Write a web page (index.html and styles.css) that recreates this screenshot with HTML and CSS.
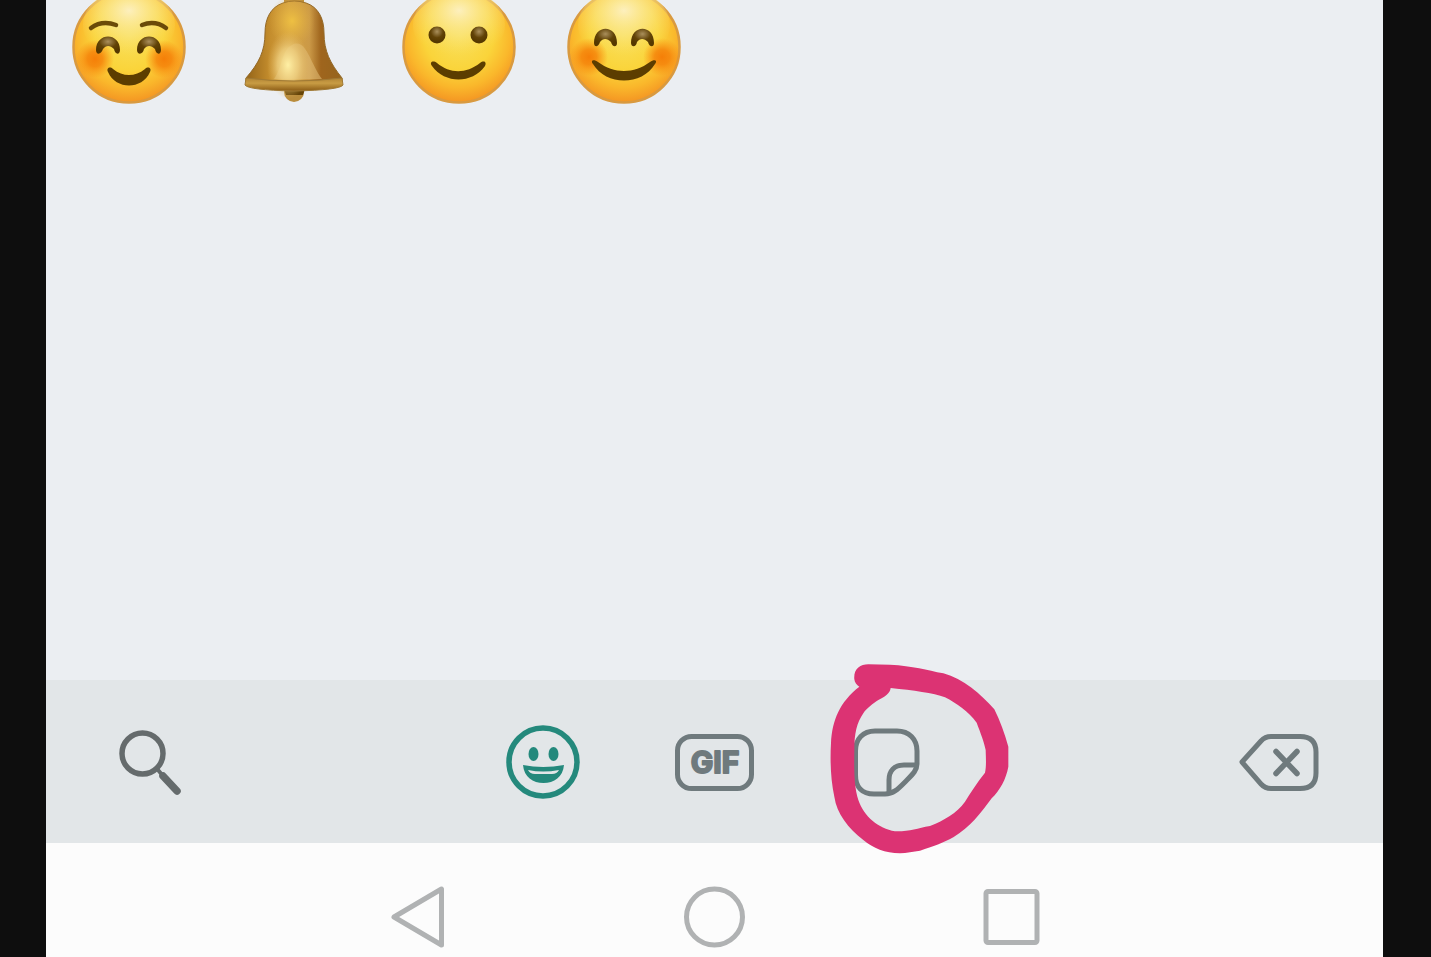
FILE: index.html
```html
<!DOCTYPE html>
<html lang="en">
<head>
  <meta charset="UTF-8">
  <meta name="viewport" content="width=device-width, initial-scale=1">

  <title>Emoji keyboard</title>

  <link rel="stylesheet" href="styles.css">
</head>
<body>

  <!-- shared gradients -->
  <svg class="Defs" aria-hidden="true">
    <defs>
      <radialGradient id="skin" cx="50%" cy="40%" r="62%">
        <stop offset="0" stop-color="#f9e05c"/>
        <stop offset=".5" stop-color="#fad43a"/>
        <stop offset=".75" stop-color="#fab72b"/>
        <stop offset="1" stop-color="#f39021"/>
      </radialGradient>
      <radialGradient id="shine" cx="50%" cy="30%" r="62%">
        <stop offset="0" stop-color="#fdf1c4" stop-opacity=".95"/>
        <stop offset=".5" stop-color="#fbe88e" stop-opacity=".6"/>
        <stop offset="1" stop-color="#fbdf60" stop-opacity="0"/>
      </radialGradient>
      <radialGradient id="blush">
        <stop offset="0" stop-color="#f57f08"/>
        <stop offset=".4" stop-color="#f57f08" stop-opacity=".8"/>
        <stop offset="1" stop-color="#f98a10" stop-opacity="0"/>
      </radialGradient>
      <radialGradient id="eye" cx="50%" cy="30%" r="60%">
        <stop offset="0" stop-color="#aa8f5c"/>
        <stop offset=".6" stop-color="#624307"/>
        <stop offset="1" stop-color="#553800"/>
      </radialGradient>
      <linearGradient id="brass" x1="0" y1="0" x2="1" y2="0">
        <stop offset="0" stop-color="#946419"/>
        <stop offset=".25" stop-color="#c48d2d"/>
        <stop offset=".45" stop-color="#d6a343"/>
        <stop offset=".66" stop-color="#cb9947"/>
        <stop offset=".78" stop-color="#9f651d"/>
        <stop offset="1" stop-color="#95641d"/>
      </linearGradient>
      <radialGradient id="gold">
        <stop offset="0" stop-color="#eec042"/>
        <stop offset="1" stop-color="#dfac40" stop-opacity="0"/>
      </radialGradient>
      <radialGradient id="glow">
        <stop offset="0" stop-color="#fff0a5"/>
        <stop offset=".5" stop-color="#f0d283" stop-opacity=".75"/>
        <stop offset="1" stop-color="#dfb45d" stop-opacity="0"/>
      </radialGradient>
      <linearGradient id="rim" x1="0" y1="0" x2="0" y2="1">
        <stop offset="0" stop-color="#b28434"/>
        <stop offset=".4" stop-color="#c89c44"/>
        <stop offset="1" stop-color="#8b5b14"/>
      </linearGradient>
      <g id="head">
        <circle cx="60" cy="60" r="55.500" fill="url(#skin)" stroke="#d99a40" stroke-width="2.500"/>
        <ellipse cx="60" cy="38" rx="46" ry="36" fill="url(#shine)"/>
      </g>
    </defs>
  </svg>

  <div class="Keyboard">
    <main class="Emojis">
      <div class="Emojis__grid">
        <button class="Emojis__key" type="button" aria-label="Smiling face">
          <svg viewBox="0 0 120 120">
            <use href="#head"/>
            <circle cx="26" cy="72" r="19" fill="url(#blush)"/>
            <circle cx="95" cy="72" r="19" fill="url(#blush)"/>
            <g fill="none" stroke="#6b4a08" stroke-width="4.500" stroke-linecap="round">
              <path d="M22 41Q33 33 47 38"/>
              <path d="M73 38Q86 33 97 41"/>
            </g>
            <path d="M27 63C27 45 51 45 51 63C51 68 46 68 45 62C41 58 37 58 34 62C32 68 27 68 27 63Z" fill="url(#eye)"/>
            <path d="M68 63C68 45 92 45 92 63C92 68 87 68 86 62C82 58 78 58 75 62C74 68 68 68 68 63Z" fill="url(#eye)"/>
            <path d="M39 85C37 81 41 79 44 82C54 90 66 90 76 82C79 79 83 81 81 85C73 103 47 103 39 85Z" fill="#5c3d00"/>
          </svg>
        </button>
        <button class="Emojis__key" type="button" aria-label="Bell">
          <svg viewBox="0 0 120 120">
            <path d="M50 5H70V20H50Z" fill="#bd8d3a"/>
            <circle cx="60" cy="105" r="10" fill="#b98c3c"/>
            <path d="M50 102H71L69 108H52Z" fill="#654408"/>
            <path d="M49 16C37 20 31 31 31 46C31 64 25 76 12 91V94H108V91C96 76 90 64 90 46C90 31 84 20 72 16Q60 12 49 16Z" fill="url(#brass)" stroke="#936827"/>
            <ellipse cx="58" cy="34" rx="23" ry="26" fill="url(#gold)"/>
            <path d="M58 58C72 50 76 76 88 92H40C48 82 48 62 58 58Z" fill="#e2bd77" opacity=".55"/>
            <ellipse cx="54" cy="78" rx="21" ry="34" fill="url(#glow)"/>
            <path d="M12 91Q60 97 108 91L109 98Q106 103 60 104Q14 103 11 98Z" fill="url(#rim)" stroke="#a07a35"/>
          </svg>
        </button>
        <button class="Emojis__key" type="button" aria-label="Slightly smiling face">
          <svg viewBox="0 0 120 120">
            <use href="#head"/>
            <circle cx="38" cy="48" r="8.500" fill="url(#eye)"/>
            <circle cx="80" cy="48" r="8.500" fill="url(#eye)"/>
            <path d="M33 79C30 75 34 73 38 76C51 87 67 87 81 76C85 73 88 75 86 79C73 97 46 97 33 79Z" fill="#5c3d00"/>
          </svg>
        </button>
        <button class="Emojis__key" type="button" aria-label="Smiling face with smiling eyes">
          <svg viewBox="0 0 120 120">
            <use href="#head"/>
            <circle cx="25" cy="70" r="19" fill="url(#blush)"/>
            <circle cx="98" cy="70" r="19" fill="url(#blush)"/>
            <path d="M30 56C30 37 53 37 53 56C53 61 48 60 47 55C43 51 39 51 36 55C34 61 30 60 30 56Z" fill="url(#eye)"/>
            <path d="M67 56C67 37 90 37 90 56C90 61 85 60 84 55C80 51 76 51 73 55C72 61 67 60 67 56Z" fill="url(#eye)"/>
            <path d="M29 77C26 73 30 72 34 75C50 87 70 87 86 75C90 72 94 73 91 77C78 99 42 99 29 77Z" fill="#5c3d00"/>
          </svg>
        </button>
      </div>
    </main>

    <div class="Toolbar">
      <button class="Toolbar__button Toolbar__button--search" type="button" aria-label="Search">
        <svg viewBox="0 0 80 80">
          <circle cx="32.5" cy="31.5" r="20.5" stroke-width="5.5"/>
          <path d="M48 48L54 55" stroke-width="4"/>
          <path d="M53 54L67 69" stroke-width="7.5"/>
        </svg>
      </button>

      <div class="Toolbar__tabs">
        <button class="Toolbar__button Toolbar__button--active" type="button" aria-label="Emoji">
          <svg viewBox="0 0 80 80">
            <circle cx="40" cy="40" r="34" stroke-width="5.5"/>
            <g fill="currentColor" stroke="none">
              <ellipse cx="30.5" cy="32" rx="5" ry="7"/>
              <ellipse cx="50.5" cy="32" rx="5" ry="7"/>
              <path d="M20 43Q40 47 61 43C60 55 51 61 40.5 61S21 55 20 43ZM25 48Q27 52 32 52H49Q54 52 56 48Q40 51 25 48Z" fill-rule="evenodd"/>
            </g>
          </svg>
        </button>
        <button class="Toolbar__button" type="button">
          <svg viewBox="0 0 80 80">
            <rect x="2.5" y="14.5" width="74" height="52" rx="14"/>
            <text class="Toolbar__gif" x="40" y="51" text-anchor="middle">GIF</text>
          </svg>
        </button>
        <button class="Toolbar__button" type="button" aria-label="Stickers">
          <svg viewBox="0 0 80 80">
            <path d="M28 9H50C62 9 70 17 70 29V42C70 48 66 52 60 58C52 66 47 72 38 72H27C15 72 8.5 65 8.5 53V29C8.5 17 16 9 28 9Z"/>
            <path d="M69 43H57C47 43 42 49 42 58V70"/>
          </svg>
          <!-- hand-drawn ring round the sticker tab -->
          <svg class="Toolbar__ring" viewBox="0 0 660 660" aria-hidden="true">
            <path fill-rule="evenodd" d="M133 88C130 58 150 43 175 43L240 44C310 48 350 60 400 70C460 86 512 132 553 178C570 212 584 250 595 290L595 350C588 388 570 420 545 445C512 490 480 532 430 562C400 578 370 590 330 602C310 604 290 610 270 610C225 609 190 595 160 570C115 535 80 490 73 440C62 390 60 330 63 280C66 210 90 155 148 110C140 105 134 98 133 88ZM242 114C240 130 225 140 205 150C190 160 170 174 160 190C140 220 133 250 133 300C132 360 132 410 145 450C162 500 205 535 255 544C300 545 320 535 360 528C400 512 440 490 465 455C480 430 500 400 525 368C529 350 528 330 527 300C522 275 512 250 500 218C475 185 440 160 405 142C370 129 310 121 242 114Z"/>
          </svg>
        </button>
      </div>

      <button class="Toolbar__button" type="button" aria-label="Delete">
        <svg viewBox="0 0 80 80">
          <path d="M3 40L22 19Q26 14.5 32 14.5H61Q77 14.5 77 30V51Q77 66.5 61 66.5H32Q26 66.5 22 62Z"/>
          <path d="M37 29.5L58 51.5M58 29.5L37 51.5" stroke-width="5.5"/>
        </svg>
      </button>
    </div>

    <nav class="Nav">
      <button class="Nav__button" type="button" aria-label="Back">
        <svg viewBox="0 0 64 64"><path d="M8 32L55.5 4V60Z"/></svg>
      </button>
      <button class="Nav__button" type="button" aria-label="Home">
        <svg viewBox="0 0 64 64"><circle cx="31.5" cy="32" r="28"/></svg>
      </button>
      <button class="Nav__button" type="button" aria-label="Recent apps">
        <svg viewBox="0 0 64 64"><rect x="6" y="6.5" width="51" height="51" rx="2"/></svg>
      </button>
    </nav>
  </div>

</body>
</html>
```

FILE: styles.css
```css
*,
*::before,
*::after {
  box-sizing: border-box;
}
html, body {
  height: 100%;
  margin: 0;
}
body {
  padding: 0 48px 0 46px;
  background-color: #0e0e0e;
  font-family: Inter, "Liberation Sans", sans-serif;
}
button {
  padding: 0;
  border: 0;
  background: none;
  cursor: pointer;
}
svg {
  display: block;
}

.Defs {
  position: absolute;
  width: 0;
  height: 0;
}

.Keyboard {
  display: flex;
  flex-direction: column;
  min-height: 100%;
}

.Emojis {
  flex: 1;
  padding-right: 16px;
  overflow: hidden;
  background-color: #ebeef2;
}
/* the list is scrolled a little, so the first row is cut off */
.Emojis__grid {
  display: grid;
  grid-template-columns: repeat(8, 1fr);
  margin-top: -13px;
}
.Emojis__key {
  display: flex;
  justify-content: center;
}
.Emojis__key svg {
  width: 120px;
  height: 120px;
}

.Toolbar {
  display: flex;
  align-items: center;
  justify-content: space-between;
  padding: 0 64px;
  background-color: #e2e6e8;
}
.Toolbar__tabs {
  display: flex;
}
.Toolbar__tabs .Toolbar__button {
  width: 172px;
}
.Toolbar__button {
  position: relative;
  display: flex;
  align-items: center;
  justify-content: center;
  height: 163px;
  color: #6f7a7d;
}
.Toolbar__button svg {
  width: 80px;
  height: 80px;
  fill: none;
  stroke: currentColor;
  stroke-width: 5;
  stroke-linecap: round;
  stroke-linejoin: round;
}
.Toolbar__button--search {
  color: #656b6c;
}
.Toolbar__button--active {
  color: #24897c;
}
.Toolbar__button .Toolbar__gif {
  fill: currentColor;
  stroke-width: 2;
  font-family: Inter, "Liberation Sans", sans-serif;
  font-size: 30px;
  font-weight: bold;
}
.Toolbar__button .Toolbar__ring {
  position: absolute;
  top: -30px;
  left: 9px;
  width: 220px;
  height: 220px;
  fill: #dc3373;
  stroke: none;
  pointer-events: none;
}

.Nav {
  display: flex;
  justify-content: center;
  padding: 42px 0 8px;
  background-color: #fcfcfc;
}
.Nav__button {
  display: flex;
  justify-content: center;
  width: 297px;
}
.Nav__button svg {
  width: 64px;
  height: 64px;
  fill: none;
  stroke: #b0b2b3;
  stroke-width: 5;
  stroke-linejoin: round;
}
```
